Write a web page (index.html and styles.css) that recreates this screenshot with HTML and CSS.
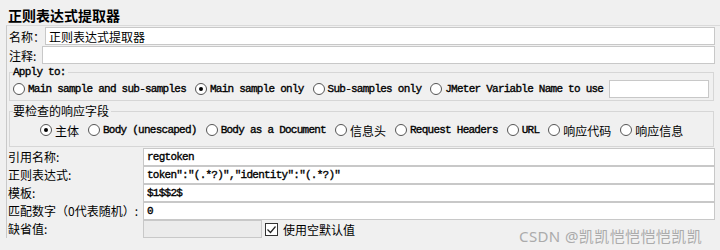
FILE: index.html
```html
<!DOCTYPE html>
<html lang="zh">
<head>
    <meta charset="UTF-8">
    <title>正则表达式提取器</title>
    <link rel="stylesheet" href="styles.css">
</head>
<body>
    <h1 class="title">正则表达式提取器</h1>

    <div class="panel">
        <!-- name / comment -->
        <div class="row">
            <label class="lbl">名称：</label>
            <input class="field" type="text" value="正则表达式提取器">
        </div>
        <div class="row">
            <label class="lbl short">注释:</label>
            <input class="field" type="text" value="">
        </div>

        <!-- Apply to -->
        <fieldset class="group">
            <legend class="mono">Apply to:</legend>
            <div class="radios">
                <span class="opt"><span class="dot"></span><span class="mono">Main sample and sub-samples</span></span>
                <span class="opt"><span class="dot on"></span><span class="mono">Main sample only</span></span>
                <span class="opt"><span class="dot"></span><span class="mono">Sub-samples only</span></span>
                <span class="opt"><span class="dot"></span><span class="mono">JMeter Variable Name to use</span></span>
                <input class="field var-name" type="text" value="">
            </div>
        </fieldset>

        <!-- response field to check -->
        <fieldset class="group second">
            <legend>要检查的响应字段</legend>
            <div class="radios indent">
                <span class="opt"><span class="dot on"></span><span>主体</span></span>
                <span class="opt"><span class="dot"></span><span class="mono">Body (unescaped)</span></span>
                <span class="opt"><span class="dot"></span><span class="mono">Body as a Document</span></span>
                <span class="opt"><span class="dot"></span><span>信息头</span></span>
                <span class="opt"><span class="dot"></span><span class="mono">Request Headers</span></span>
                <span class="opt"><span class="dot"></span><span class="mono">URL</span></span>
                <span class="opt"><span class="dot"></span><span>响应代码</span></span>
                <span class="opt"><span class="dot"></span><span>响应信息</span></span>
            </div>
        </fieldset>

        <!-- extractor settings -->
        <div class="form">
            <label class="form-lbl">引用名称:</label>
            <input class="field mono" type="text" value="regtoken">
            <label class="form-lbl">正则表达式:</label>
            <input class="field mono" type="text" value='token":"(.*?)","identity":"(.*?)"'>
            <label class="form-lbl">模板:</label>
            <input class="field mono" type="text" value="$1$$2$">
            <label class="form-lbl">匹配数字（0代表随机）:</label>
            <input class="field mono" type="text" value="0">
            <label class="form-lbl">缺省值:</label>
            <div class="default-row">
                <input class="field small" type="text" value="">
                <span class="check">
                    <svg width="11" height="11" viewBox="0 0 11 11"><polyline points="1.5,5.5 4.5,8.5 9.5,2.5" fill="none" stroke="#222" stroke-width="1.2"/></svg>
                </span>
                <span>使用空默认值</span>
            </div>
        </div>
    </div>

    <div class="watermark">CSDN @凯凯恺恺恺恺凯凯</div>
</body>
</html>
```

FILE: styles.css
```css
body {
    margin: 0;
    width: 720px;
    height: 250px;
    overflow: hidden;
    position: relative;
    background-color: #f0f0f0;
    font-family: "Noto Sans CJK SC", sans-serif;
    font-size: 12px;
    color: #000;
}
.title {
    font-size: 14px;
    font-weight: bold;
    line-height: 16px;
    margin: 7px 0 0 8px;
}
.panel {
    margin: 2px 0 0 6px;
    padding: 1px 5px 0 0;
    border-left: 1px solid #c9c9c9;
    border-top: 1px solid #dadada;
}
.row {
    display: flex;
    align-items: center;
    height: 18px;
    margin-bottom: 1px;
}
.lbl {
    width: 36px;
    padding-left: 2px;
    flex: none;
}
.lbl.short {
    width: 33px;
}
.field {
    flex: 1;
    min-width: 0;
    height: 18px;
    box-sizing: border-box;
    border: 1px solid #c8c8c8;
    background: #fff;
    padding: 0 3px;
    margin: 0;
    font-family: "Noto Sans CJK SC", sans-serif;
    font-size: 12px;
    color: #000;
    outline: none;
}
.mono, .field.mono {
    font-family: "Liberation Mono", monospace;
    font-size: 11px;
    letter-spacing: -0.75px;
    -webkit-text-stroke: 0.35px #000;
}
.group {
    border: 1px solid #d6d6d6;
    margin: 2px 1px 0 2px;
    padding: 2px 1px 2px 3px;
    min-width: 0;
}
.group legend {
    padding: 0 2px 0 0;
    line-height: 12px;
}
.group.second {
    margin-top: 4px;
    padding-top: 6px;
    padding-bottom: 9px;
}
.radios {
    display: flex;
    align-items: center;
    height: 18px;
    white-space: nowrap;
}
.radios.indent {
    height: 14px;
    padding-left: 27px;
}
.opt {
    display: flex;
    align-items: center;
    margin-right: 9px;
}
.dot {
    width: 12px;
    height: 12px;
    box-sizing: border-box;
    border: 1px solid #555;
    border-radius: 50%;
    background: #fff;
    margin-right: 3px;
    position: relative;
}
.dot.on::after {
    content: "";
    position: absolute;
    left: 3px;
    top: 3px;
    width: 4px;
    height: 4px;
    border-radius: 50%;
    background: #000;
}
.var-name {
    flex: none;
    width: 100px;
    margin-left: -3px;
}
.form {
    display: grid;
    grid-template-columns: 136px 1fr;
    margin-top: 1px;
}
.form-lbl {
    padding-left: 1px;
    height: 18px;
    line-height: 18px;
    white-space: nowrap;
}
.default-row {
    display: flex;
    align-items: center;
    height: 18px;
}
.field.small {
    flex: none;
    width: 119px;
    background: #ebebeb;
}
.check {
    width: 13px;
    height: 13px;
    box-sizing: border-box;
    border: 1px solid #333;
    background: #fff;
    margin: 0 5px 0 3px;
    display: flex;
    align-items: center;
    justify-content: center;
}
.watermark {
    position: absolute;
    left: 519px;
    top: 225px;
    font-family: "Noto Sans", "Noto Sans CJK SC", sans-serif;
    font-size: 15px;
    letter-spacing: 0.4px;
    color: #ababab;
}
```
